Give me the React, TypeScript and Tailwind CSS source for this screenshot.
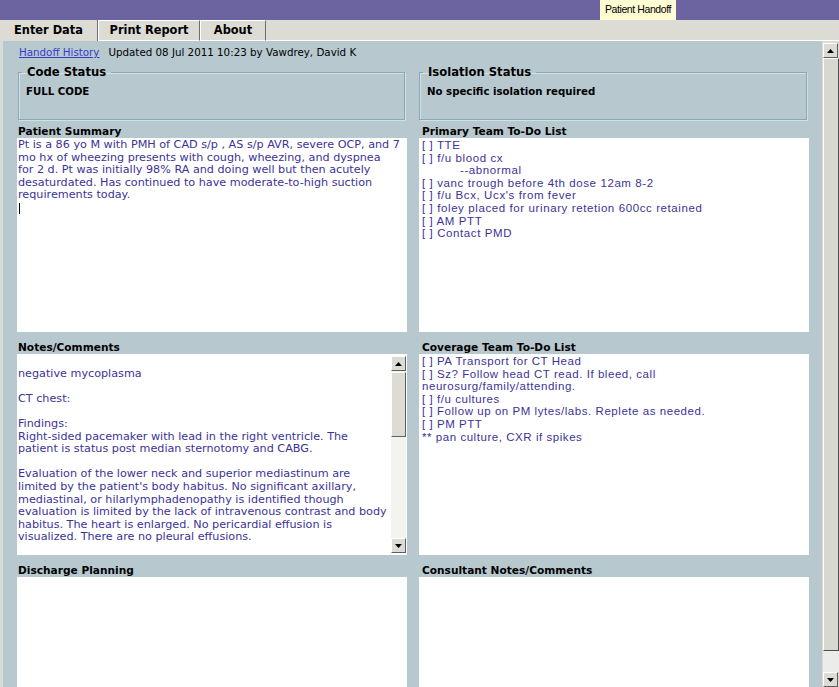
import React from "react";

const ink = "text-[#3b3399]";
const verdana = "font-['DejaVu_Sans',Verdana,sans-serif]";
const arial = "font-['Liberation_Sans',Arial,sans-serif]";

const summaryLines = [
  "Pt is a 86 yo M with PMH of CAD s/p , AS s/p AVR, severe OCP, and 7",
  "mo hx of wheezing presents with cough, wheezing, and dyspnea",
  "for 2 d. Pt was initially 98% RA and doing well but then acutely",
  "desaturdated. Has continued to have moderate-to-high suction",
  "requirements today.",
];

const primaryLines = [
  "[ ] TTE",
  "[ ] f/u blood cx",
  "          --abnormal",
  "[ ] vanc trough before 4th dose 12am 8-2",
  "[ ] f/u Bcx, Ucx's from fever",
  "[ ] foley placed for urinary retetion 600cc retained",
  "[ ] AM PTT",
  "[ ] Contact PMD",
];

const notesLines = [
  "",
  "negative mycoplasma",
  "",
  "CT chest:",
  "",
  "Findings:",
  "Right-sided pacemaker with lead in the right ventricle. The",
  "patient is status post median sternotomy and CABG.",
  "",
  "Evaluation of the lower neck and superior mediastinum are",
  "limited by the patient's body habitus. No significant axillary,",
  "mediastinal, or hilarlymphadenopathy is identified though",
  "evaluation is limited by the lack of intravenous contrast and body",
  "habitus. The heart is enlarged. No pericardial effusion is",
  "visualized. There are no pleural effusions.",
];

const coverageLines = [
  "[ ] PA Transport for CT Head",
  "[ ] Sz? Follow head CT read. If bleed, call",
  "neurosurg/family/attending.",
  "[ ] f/u cultures",
  "[ ] Follow up on PM lytes/labs. Replete as needed.",
  "[ ] PM PTT",
  "** pan culture, CXR if spikes",
];

function Arrow({ dir }: { dir: "up" | "down" }) {
  return (
    <div className="flex h-[15px] w-[15px] shrink-0 items-center justify-center border border-t-white border-l-white border-r-[#5e5e5e] border-b-[#5e5e5e] bg-[#dcdcd4]">
      <svg width="7" height="4" viewBox="0 0 7 4">
        <path d={dir === "up" ? "M0 4 L3.5 0 L7 4 Z" : "M0 0 L3.5 4 L7 0 Z"} fill="#000" />
      </svg>
    </div>
  );
}

function Lines({ lines, font }: { lines: string[]; font: string }) {
  return (
    <div className={`${font} ${ink} whitespace-pre`}>
      {lines.map((l, i) => (
        <div key={i} className="h-[12.6px] leading-[12.6px]">
          {l || " "}
        </div>
      ))}
    </div>
  );
}

function Status({ title, value }: { title: string; value: string }) {
  return (
    <fieldset className="h-[55px] border border-[#87a9b3] px-[3px] pb-0 pt-[7px] shadow-[inset_1px_1px_0_#d3e1e5,1px_1px_0_#d3e1e5]">
      <legend className="px-[5px] text-[11.6px] font-bold leading-[14px] text-black">{title}</legend>
      <div className="pl-[4px] text-[10.2px] font-bold leading-[12px] text-black">{value}</div>
    </fieldset>
  );
}

function Label({ children, top }: { children: React.ReactNode; top: string }) {
  return (
    <div className={`${top} h-[14px] pl-[1px] text-[10.6px] font-bold leading-[14px] text-black`}>{children}</div>
  );
}

export default function App() {
  return (
    <div className={`${verdana} flex h-[687px] w-[839px] flex-col overflow-hidden bg-[#b7c8ce]`}>
      {/* title strip */}
      <div className="flex h-[20px] shrink-0 bg-[#6b64a1]">
        <div className={`${arial} ml-[600px] flex h-[20px] w-[76px] items-center justify-center bg-[#fffbd2] text-[10.5px] tracking-[-0.4px] text-black`}>
          Patient Handoff
        </div>
      </div>

      {/* tabs */}
      <div className="flex h-[21px] shrink-0 bg-[#dcdcd4] text-[11.4px] font-bold text-black">
        <div className="flex w-[98px] items-center pl-[14px] pt-[1px] border-r border-r-[#6e6e6e]">Enter Data</div>
        <div className="flex w-[102px] items-center justify-center border-t border-t-white border-b border-b-white border-l border-l-white border-r border-r-[#6e6e6e] pt-[1px]">
          Print Report
        </div>
        <div className="flex w-[66px] items-center justify-center border-t border-t-white border-b border-b-white border-l border-l-white border-r border-r-[#6e6e6e] pt-[1px]">
          About
        </div>
        <div className="flex-1 border-b border-b-white" />
      </div>

      {/* body */}
      <div className="flex min-h-0 flex-1">
        <div className="min-w-0 flex-1 border-l-[3px] border-l-[#d6dcd8] pl-[14px] pt-[5px]">
          <div className="flex h-[14px] items-center gap-[9px] pl-[2px] text-[10.3px] text-black">
            <span className="text-[#3a3ac8] underline">Handoff History</span>
            <span>Updated 08 Jul 2011 10:23 by Vawdrey, David K</span>
          </div>

          <div className="mt-[5px] grid grid-cols-[390px_390px] gap-x-[12px]">
            <div className="pl-[1px] pr-[2px]">
              <Status title="Code Status" value="FULL CODE" />
            </div>
            <div className="pr-[2px]">
              <Status title="Isolation Status" value="No specific isolation required" />
            </div>

            <Label top="mt-[4px]">Patient Summary</Label>
            <Label top="mt-[4px] pl-[3px]">Primary Team To-Do List</Label>

            <div className="relative h-[194px] bg-white pl-[1px] pt-[1px] text-[11.2px]">
              <Lines lines={summaryLines} font={verdana} />
              <div className="ml-[1px] mt-[1px] h-[11px] w-[1px] bg-black" />
            </div>
            <div className="h-[194px] bg-white pl-[3px] pt-[1px] text-[11.5px] tracking-[0.6px]">
              <Lines lines={primaryLines} font={arial} />
            </div>

            <Label top="mt-[8px]">Notes/Comments</Label>
            <Label top="mt-[8px] pl-[3px]">Coverage Team To-Do List</Label>

            <div className="flex h-[201px] bg-white text-[11.2px]">
              <div className="min-w-0 flex-1 overflow-hidden pl-[1px] pt-[1px]">
                <Lines lines={notesLines} font={verdana} />
              </div>
              <div className="mr-[1px] mt-[2px] mb-[2px] flex w-[15px] shrink-0 flex-col bg-[#f3f3ef]">
                <Arrow dir="up" />
                <div className="mt-[1px] h-[65px] border border-t-white border-l-white border-r-[#5e5e5e] border-b-[#5e5e5e] bg-[#dcdcd4]" />
                <div className="flex-1" />
                <Arrow dir="down" />
              </div>
            </div>
            <div className="h-[201px] bg-white pl-[3px] pt-[1px] text-[11.5px] tracking-[0.55px]">
              <Lines lines={coverageLines} font={arial} />
            </div>

            <Label top="mt-[8px]">Discharge Planning</Label>
            <Label top="mt-[8px] pl-[3px]">Consultant Notes/Comments</Label>

            <div className="h-[130px] bg-white" />
            <div className="h-[130px] bg-white" />
          </div>
        </div>

        {/* page scrollbar */}
        <div className="flex w-[17px] shrink-0 flex-col bg-[#dcdcd4] pl-[1px] pt-[2px]">
          <Arrow dir="up" />
          <div className="h-[593px] border border-t-white border-l-white border-r-[#4e4e4e] border-b-[#4e4e4e] bg-[#d8d8d0]" />
          <div className="flex-1 bg-[#ececea]" />
          <Arrow dir="down" />
        </div>
      </div>
    </div>
  );
}
